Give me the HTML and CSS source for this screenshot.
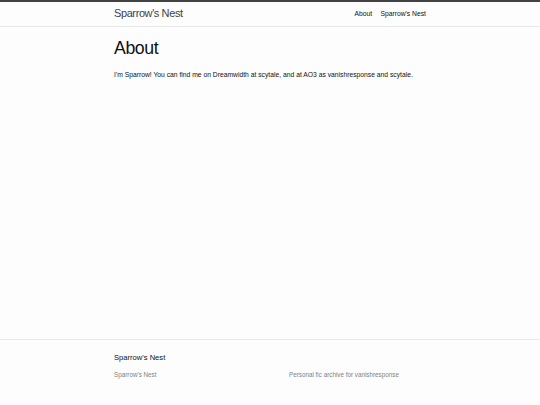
FILE: index.html
```html
<!DOCTYPE html>
<html lang="en">
<head>
    <meta charset="UTF-8">
    <meta name="viewport" content="width=device-width, initial-scale=1.0">
    <title>About | Sparrow's Nest</title>
    <link rel="stylesheet" href="styles.css">
</head>
<body>

    <header class="site-header">
        <div class="wrapper header-row">
            <a class="site-title" href="#">Sparrow's Nest</a>
            <nav class="site-nav">
                <a class="page-link" href="#">About</a>
                <a class="page-link" href="#">Sparrow's Nest</a>
            </nav>
        </div>
    </header>

    <main class="page-content">
        <div class="wrapper">
            <article class="post">
                <h1 class="post-title">About</h1>
                <p>I'm Sparrow! You can find me on Dreamwidth at scytale, and at AO3 as vanishresponse and scytale.</p>
            </article>
        </div>
    </main>

    <!-- site footer: name, links, description -->
    <footer class="site-footer">
        <div class="wrapper">
            <h2 class="footer-heading">Sparrow's Nest</h2>
            <div class="footer-cols">
                <ul class="contact-list">
                    <li>Sparrow's Nest</li>
                </ul>
                <div class="footer-col-3">
                    <p>Personal fic archive for vanishresponse</p>
                </div>
            </div>
        </div>
    </footer>

</body>
</html>
```

FILE: styles.css
```css
html, body {
    margin: 0;
    padding: 0;
}
body {
    font-family: "Liberation Sans", Arial, sans-serif;
    font-size: 6.75px;
    line-height: 1.5;
    color: #111;
    background-color: #fdfdfd;
    min-height: 100vh;
    display: flex;
    flex-direction: column;
}
a {
    text-decoration: none;
}
.wrapper {
    max-width: 312px;
    margin: 0 auto;
}

/* header */
.site-header {
    border-top: 2px solid #424242;
    border-bottom: 1px solid #e8e8e8;
}
.header-row {
    display: flex;
    justify-content: space-between;
    align-items: center;
    min-height: 23.6px;
}
.site-title {
    font-size: 11px;
    font-weight: 300;
    letter-spacing: -0.4px;
    line-height: 22.8px;
    color: #424242;
}
.site-nav {
    display: flex;
    gap: 8.4px;
    line-height: 23.6px;
}
.page-link {
    color: #111;
}

/* page content */
.page-content {
    flex: 1;
    padding: 12.6px 0;
}
.post-title {
    margin: 1px 0 12.6px;
    font-size: 17.7px;
    font-weight: 400;
    letter-spacing: -0.42px;
    line-height: 1;
}
.post p {
    margin: 0;
}

/* footer */
.site-footer {
    border-top: 1px solid #e8e8e8;
    padding: 12.6px 0 19.4px;
}
.footer-heading {
    margin: 0 0 6.3px;
    font-size: 7.6px;
    font-weight: 400;
}
.footer-cols {
    display: grid;
    grid-template-columns: 175px 1fr;
    font-size: 6.3px;
    color: #828282;
}
.contact-list {
    list-style: none;
    margin: 0 0 6.3px;
    padding: 0;
}
.footer-col-3 p {
    margin: 0;
}
```
